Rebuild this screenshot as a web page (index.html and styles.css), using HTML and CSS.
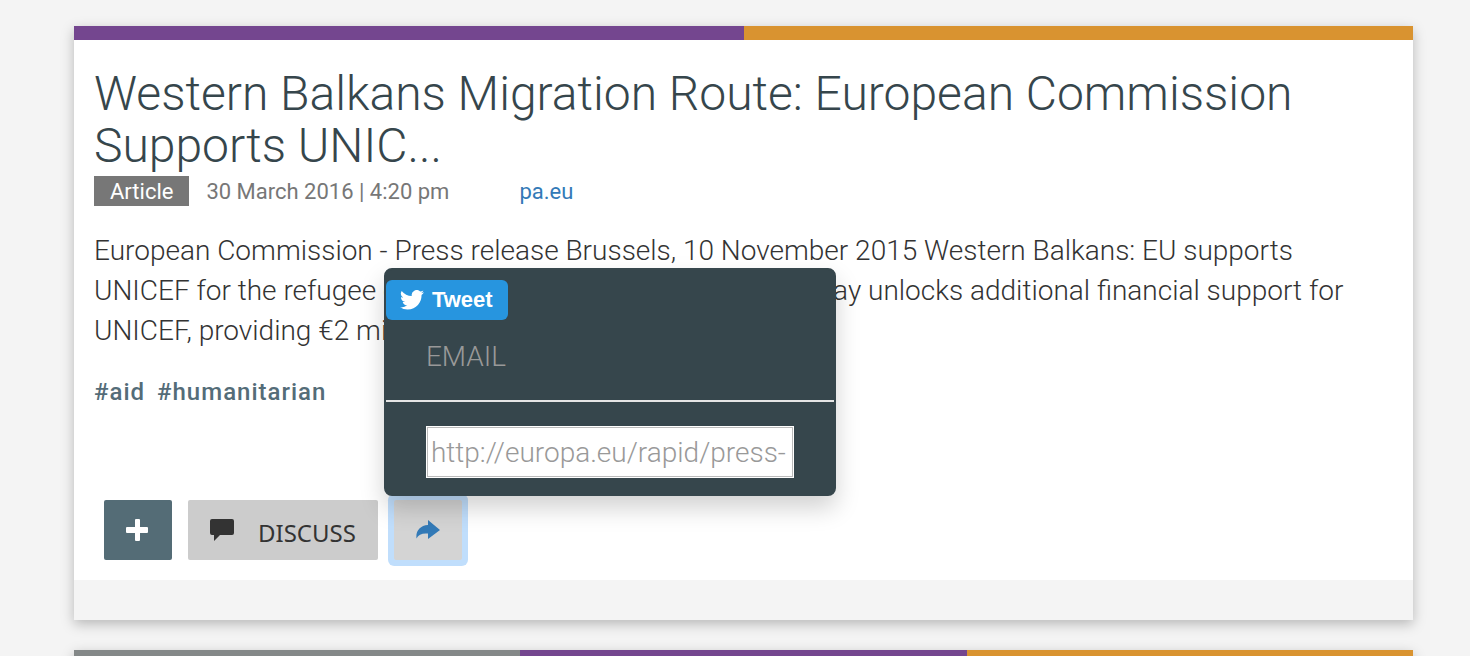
FILE: index.html
```html
<!DOCTYPE html>
<html lang="en">
<head>
<meta charset="utf-8">
<title>Western Balkans Migration Route</title>
<link rel="stylesheet" href="styles.css">
</head>
<body>
<main class="feed">
  <article class="card">
    <div class="stripes"><span class="stripe purple"></span><span class="stripe orange"></span></div>
    <div class="card-body">
      <h2 class="title">Western Balkans Migration Route: European Commission Supports UNIC...</h2>
      <div class="meta">
        <span class="badge">Article</span>
        <time class="date" datetime="2016-03-30T16:20">30 March 2016 | 4:20 pm</time>
        <a class="source" href="#">pa.eu</a>
      </div>
      <p class="summary">European Commission - Press release Brussels, 10 November 2015 Western Balkans: EU supports UNICEF for the refugee crisis The European Commission today unlocks additional financial support for UNICEF, providing €2 million.</p>
      <div class="tags"><a class="tag" href="#">#aid</a><a class="tag" href="#">#humanitarian</a></div>
      <div class="actions">
        <button class="btn btn-add" type="button" aria-label="Add">
          <svg width="24" height="24" viewBox="0 0 24 24"><path d="M9 2Q9 1 10 1H13Q14 1 14 2V9H21Q22 9 22 10V14Q22 15 21 15H14V22Q14 23 13 23H10Q9 23 9 22V15H1Q0 15 0 14V10Q0 9 1 9H9Z" fill="#fff"/></svg>
        </button>
        <button class="btn btn-discuss" type="button">
          <svg width="24" height="22" viewBox="0 0 24 22"><path d="M2 0H22Q24 0 24 2V14Q24 16 22 16H10L4 22V16H2Q0 16 0 14V2Q0 0 2 0Z" fill="#333"/></svg>
          <span class="btn-label">DISCUSS</span>
        </button>
        <div class="share">
          <button class="btn btn-share" type="button" aria-label="Share" aria-expanded="true">
            <svg width="24" height="20" viewBox="0 0 24 20"><path d="M12 0L24 10L12 19V13.500C6 13 2.500 14.500.500 18.500C-.500 11 4 5.500 12 5Z" fill="#337ab7"/></svg>
          </button>
          <div class="popup">
            <a class="tweet" href="#">
              <svg width="24" height="20" viewBox="0 0 24 20"><path d="M24 2.370a9.600 9.600 0 0 1-2.830.780A4.940 4.940 0 0 0 23.340.420a9.860 9.860 0 0 1-3.130 1.200A4.920 4.920 0 0 0 11.820 6.100 13.980 13.980 0 0 1 1.670.960a4.930 4.930 0 0 0 1.520 6.570 4.900 4.900 0 0 1-2.230-.620v.060a4.930 4.930 0 0 0 3.950 4.830 4.950 4.950 0 0 1-2.220.080 4.930 4.930 0 0 0 4.600 3.420A9.880 9.880 0 0 1 0 17.340a13.940 13.940 0 0 0 7.550 2.210c9.050 0 14-7.500 14-14v-.630A10 10 0 0 0 24 2.370z" fill="#fff"/></svg>
              <span>Tweet</span>
            </a>
            <a class="email" href="#">EMAIL</a>
            <div class="link-row"><input class="link" type="text" aria-label="Link" value="http://europa.eu/rapid/press-"></div>
          </div>
        </div>
      </div>
    </div>
    <div class="card-footer"></div>
  </article>
  <article class="card">
    <div class="stripes"><span class="stripe grey"></span><span class="stripe purple"></span><span class="stripe orange"></span></div>
    <div class="card-body"></div>
  </article>
</main>
</body>
</html>
```
FILE: styles.css
```css
* { box-sizing: border-box; }
body {
  margin: 0;
  background: #f4f4f4;
  color: #333;
  font-family: Roboto, "Liberation Sans", sans-serif;
  font-weight: 300;
}
.feed {
  height: 100vh;
  overflow: hidden;
  padding: 26px 57px 0 74px;
  display: flex;
  flex-direction: column;
  gap: 30px;
}
.card {
  flex: none;
  background: #fff;
  box-shadow: 0 4px 12px rgba(0, 0, 0, .25);
}
.stripes { display: flex; height: 14px; }
.stripe { flex: 1; }
.purple { background: #74468f; }
.orange { background: #d99330; }
.grey { background: #848888; }
.card-body { padding: 28px 20px 20px; }
.card-footer { height: 40px; background: #f4f4f4; }
.title {
  margin: 0;
  font-size: 48px;
  line-height: 52px;
  font-weight: 300;
  color: #36464c;
}
.meta {
  display: flex;
  margin-top: 4px;
  font-size: 22px;
  line-height: 28px;
  font-weight: 400;
}
.badge, .date, .source { padding-top: 2px; }
.badge {
  padding-left: 16px;
  padding-right: 16px;
  background: #777;
  color: #fff;
}
.date { margin-left: 17px; color: #777; }
.source { margin-left: 70px; color: #337ab7; text-decoration: none; }
.summary {
  margin: 25px 0 0;
  font-size: 28px;
  line-height: 40px;
}
.tags {
  display: flex;
  gap: 12px;
  margin-top: 25px;
  font-size: 24px;
  line-height: 32px;
  font-weight: 500;
  letter-spacing: 1px;
}
.tag { color: #546c78; text-decoration: none; }
.actions {
  display: flex;
  gap: 16px;
  margin: 92px 10px 0;
}
.btn {
  display: flex;
  align-items: center;
  justify-content: center;
  height: 60px;
  padding: 0 22px;
  border: 0;
  border-radius: 2px;
}
.btn-add { background: #546c76; }
.btn-discuss {
  gap: 24px;
  background: #ccc;
  color: #333;
  font: 400 24px "Noto Sans", sans-serif;
}
.btn-label { padding-top: 4px; }
.share { position: relative; }
.btn-share {
  background: #d4d4d4;
  box-shadow: 0 0 0 6px #c0defc;
}
.popup {
  position: absolute;
  left: -10px;
  bottom: calc(100% + 4px);
  width: 452px;
  padding: 10px 0 16px;
  border: 2px solid #36464c;
  border-radius: 8px;
  background: #36464c;
  box-shadow: 0 12px 24px rgba(0, 0, 0, .18);
}
.tweet {
  display: flex;
  align-items: center;
  gap: 8px;
  width: 122px;
  height: 40px;
  padding-left: 14px;
  border-radius: 6px;
  background: #2795df;
  color: #fff;
  font: 700 22px "Liberation Sans", sans-serif;
  text-decoration: none;
}
.email {
  display: block;
  padding: 17px 40px 23px;
  border-bottom: 2px solid #e5e5e5;
  color: #999;
  font-size: 28px;
  line-height: 40px;
  text-decoration: none;
}
.link-row { padding: 24px 40px 0; }
.link {
  display: block;
  width: 100%;
  height: 52px;
  padding: 0 4px;
  border: 1px solid #fff;
  outline: 1px solid #bbb;
  outline-offset: -2px;
  background: #fff;
  color: #999;
  font: 300 28px Roboto, sans-serif;
}
```
